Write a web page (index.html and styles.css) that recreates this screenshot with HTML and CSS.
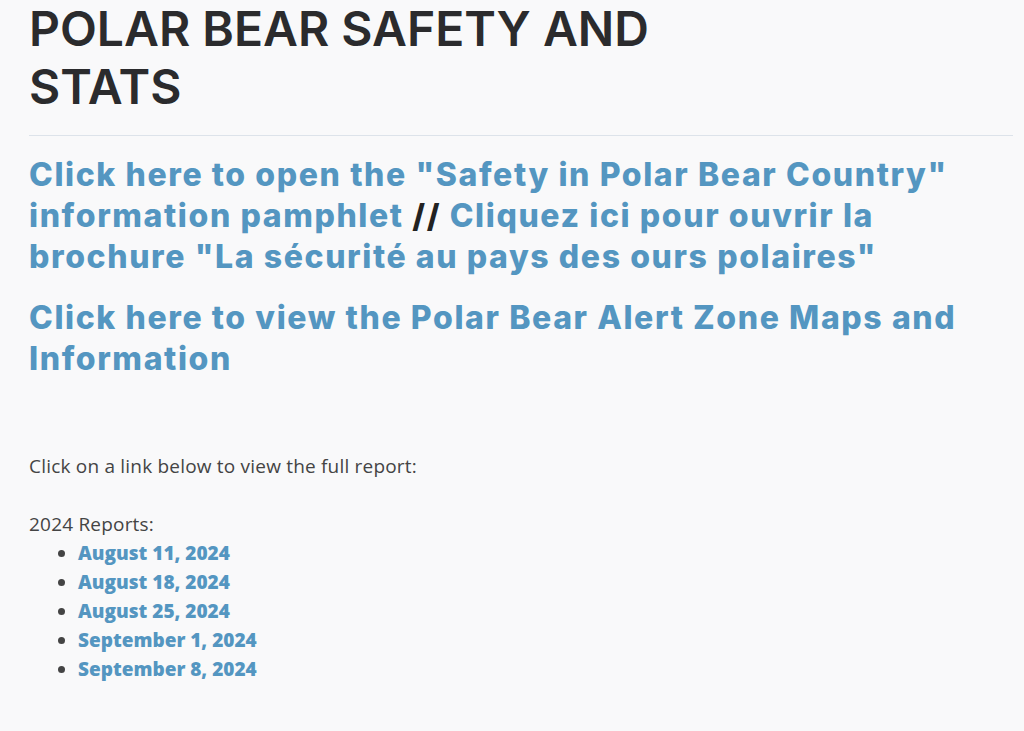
FILE: index.html
```html
<!DOCTYPE html>
<html lang="en">
<head>
    <meta charset="UTF-8">
    <meta name="viewport" content="width=device-width, initial-scale=1.0">
    <title>Polar Bear Safety and Stats</title>
    <link rel="stylesheet" href="styles.css">
</head>
<body>
    <div class="page">
        <h1 class="page-title">POLAR BEAR SAFETY AND STATS</h1>
        <hr class="rule">

        <!-- pamphlet and map links -->
        <h2 class="big-link"><a href="#">Click here to open the "Safety in Polar Bear Country" information pamphlet</a> <span class="sep">//</span> <a href="#">Cliquez ici pour ouvrir la brochure "La sécurité au pays des ours polaires"</a></h2>
        <h2 class="big-link"><a href="#">Click here to view the Polar Bear Alert Zone Maps and Information</a></h2>

        <p class="intro">Click on a link below to view the full report:</p>

        <div class="reports">
            <p class="year">2024 Reports:</p>
            <ul>
                <li><a href="#">August 11, 2024</a></li>
                <li><a href="#">August 18, 2024</a></li>
                <li><a href="#">August 25, 2024</a></li>
                <li><a href="#">September 1, 2024</a></li>
                <li><a href="#">September 8, 2024</a></li>
            </ul>
        </div>
    </div>
</body>
</html>
```

FILE: styles.css
```css
body {
    margin: 0;
    background-color: #f9f9fa;
    font-family: 'Open Sans', 'Liberation Sans', sans-serif;
    font-size: 19px;
    line-height: 29px;
    color: #444;
}
.page {
    padding: 0 11px 0 29px;
}
.page-title {
    font-family: 'Inter', 'Roboto', sans-serif;
    font-weight: 600;
    font-size: 48px;
    line-height: 58px;
    color: #2b2b2d;
    max-width: 660px;
    margin: 0;
}
.rule {
    border: none;
    border-top: 1px solid #dde3ea;
    margin: 19px 0 18px;
}
.big-link {
    font-family: 'Inter', 'Roboto', sans-serif;
    font-weight: 800;
    font-size: 32px;
    line-height: 41px;
    letter-spacing: 1.6px;
    margin: 0 0 20px;
}
.big-link a {
    color: #5496c1;
    text-decoration: none;
}
.big-link .sep {
    color: #222;
}
.intro {
    margin: 73px 0 29px;
    letter-spacing: 0.2px;
}
.year {
    margin: 0;
    letter-spacing: 0.2px;
}
.reports ul {
    margin: 0;
    padding-left: 49px;
}
.reports li a {
    color: #5496c1;
    font-weight: 800;
    text-decoration: none;
}
```
